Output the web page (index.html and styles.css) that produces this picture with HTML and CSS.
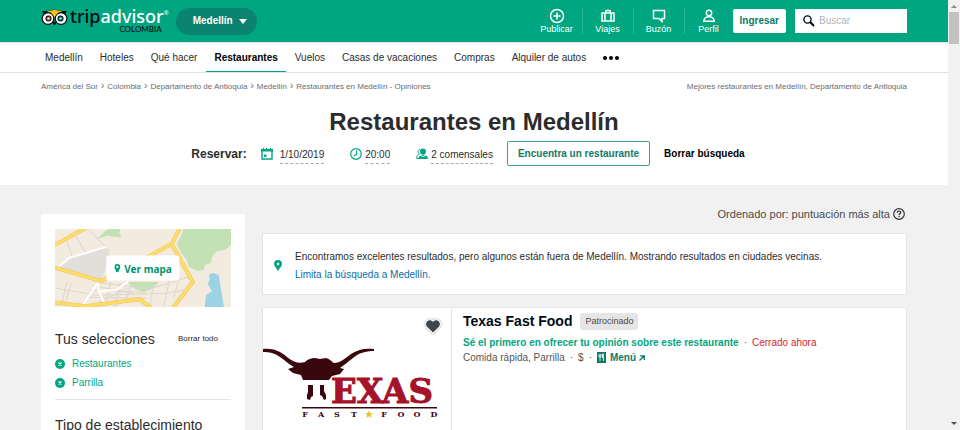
FILE: index.html
```html
<!DOCTYPE html>
<html lang="es">
<head>
<meta charset="utf-8">
<meta name="viewport" content="width=device-width, initial-scale=1">
<title>Restaurantes en Medellín</title>
<link rel="stylesheet" href="styles.css">
</head>
<body>
<div class="page">
  <header class="topbar">
    <div class="wrap topbar-row">
      <a class="logo" href="#">
        <svg class="owl" width="27" height="17" viewBox="0 0 27 17" aria-hidden="true">
          <path d="M1 2H7C11 .3 16 .3 20 2H26L24 5H3Z" fill="#000a12"/>
          <path d="M6 2.500C11 .5 16 .5 21 2.500L13.500 9Z" fill="#fcc40f"/>
          <circle cx="7" cy="9.500" r="6.500" fill="#000a12"/><circle cx="20" cy="9.500" r="6.500" fill="#000a12"/>
          <path d="M10 3.500C12 2.700 15 2.700 17 3.500L13.500 8Z" fill="#fcc40f"/>
          <path d="M11 13h5l-2.500 3.500z" fill="#000a12"/>
          <circle cx="7" cy="9.500" r="5.200" fill="#fff"/><circle cx="20" cy="9.500" r="5.200" fill="#fff"/>
          <circle cx="7.500" cy="9.500" r="3" fill="#000a12"/><circle cx="19.500" cy="9.500" r="3" fill="#000a12"/>
          <circle cx="7.500" cy="9.500" r="2" fill="#ef6945"/><circle cx="19.500" cy="9.500" r="2" fill="#00af87"/>
          <circle cx="7.500" cy="9.500" r=".8" fill="#fff"/><circle cx="19.500" cy="9.500" r=".8" fill="#fff"/>
        </svg>
        <span class="logo-text"><span class="word"><span class="trip">trip</span>advisor<sup>®</sup></span><span class="country">COLOMBIA</span></span>
      </a>
      <button class="place" type="button">Medellín <svg width="8" height="5" viewBox="0 0 8 5" aria-hidden="true"><path d="M0 0h8L4 5z" fill="#fff"/></svg></button>
      <nav class="actions" aria-label="Cuenta">
        <a href="#"><svg width="16" height="16" viewBox="0 0 16 16"><circle cx="8" cy="8" r="6.500"/><path d="M8 4.500v7M4.500 8h7"/></svg>Publicar</a>
        <a href="#"><svg width="16" height="16" viewBox="0 0 16 16"><path d="M2 5h12v8H2zM5 5v8M11 5v8M6 5V2.500h4V5"/></svg>Viajes</a>
        <a href="#"><svg width="16" height="16" viewBox="0 0 16 16"><path d="M2.500 2.500h11v8H11v3L8 10.500H2.500z"/></svg>Buzón</a>
        <a href="#"><svg width="16" height="16" viewBox="0 0 16 16"><circle cx="8" cy="5" r="2.700"/><path d="M2.800 13.300c0-6 10.400-6 10.400 0z"/></svg>Perfil</a>
      </nav>
      <button class="login" type="button">Ingresar</button>
      <label class="search">
        <svg width="12" height="12" viewBox="0 0 12 12" aria-hidden="true"><circle cx="4.500" cy="4.500" r="3.600" fill="none" stroke="#000a12" stroke-width="1.400"/><path d="M7.300 7.300L11 11" stroke="#000a12" stroke-width="2"/></svg>
        <input type="search" placeholder="Buscar" aria-label="Buscar">
      </label>
    </div>
  </header>

  <nav class="tabs" aria-label="Secciones">
    <div class="wrap tabs-row">
      <a href="#">Medellín</a>
      <a href="#">Hoteles</a>
      <a href="#">Qué hacer</a>
      <a href="#" class="current" aria-current="page">Restaurantes</a>
      <a href="#">Vuelos</a>
      <a href="#">Casas de vacaciones</a>
      <a href="#">Compras</a>
      <a href="#">Alquiler de autos</a>
      <button class="more" type="button" aria-label="Más"><svg width="16" height="4" viewBox="0 0 16 4"><circle cx="2" cy="2" r="2"/><circle cx="8" cy="2" r="2"/><circle cx="14" cy="2" r="2"/></svg></button>
    </div>
  </nav>

  <section class="intro">
    <div class="wrap crumbs">
      <ol>
        <li><a href="#">América del Sur</a></li>
        <li><a href="#">Colombia</a></li>
        <li><a href="#">Departamento de Antioquia</a></li>
        <li><a href="#">Medellín</a></li>
        <li>Restaurantes en Medellín - Opiniones</li>
      </ol>
      <span>Mejores restaurantes en Medellín, Departamento de Antioquia</span>
    </div>
    <h1>Restaurantes en Medellín</h1>
    <form class="wrap booking">
      <strong>Reservar:</strong>
      <button class="pick date" type="button"><svg width="12" height="12" viewBox="0 0 12 12" aria-hidden="true"><path d="M1 2v9h10V2" fill="none" stroke="#00a680" stroke-width="1.400"/><path d="M0 1h12v2.500H0zM2 0h1v2H2zM5 0h1v2H5zM9 0h1v2H9z" fill="#00a680"/><path d="M3 6.500h2.500V9H3z" fill="#00a680"/></svg><span>1/10/2019</span></button>
      <button class="pick" type="button"><svg width="12" height="12" viewBox="0 0 12 12" aria-hidden="true"><circle cx="6" cy="6" r="5.300" fill="none" stroke="#00a680" stroke-width="1.200"/><path d="M6.500 2.500v4L4 8" fill="none" stroke="#00a680" stroke-width="1.200"/></svg><span>20:00</span></button>
      <button class="pick" type="button"><svg width="12" height="12" viewBox="0 0 12 12" aria-hidden="true"><circle cx="7" cy="3.500" r="3" fill="#00a680"/><path d="M2.500 11c0-6 9.500-6 9.500 0z" fill="#00a680"/><path d="M4 1.500C1.500 2 1.500 5 3.500 6 1.500 7 .7 8 .7 10.500H3" fill="none" stroke="#00a680"/><path d="M4 7l3 1.500L10 7" fill="none" stroke="#fff"/></svg><span>2 comensales</span></button>
      <button class="find" type="submit">Encuentra un restaurante</button>
      <button class="clear" type="reset">Borrar búsqueda</button>
    </form>
  </section>

  <main class="wrap results">
    <aside class="filters">
      <div class="map">
        <svg viewBox="0 0 175 78" preserveAspectRatio="xMidYMid slice" aria-hidden="true">
          <path d="M0 0h175v78H0z" fill="#f3ebdf"/>
          <g fill="#c3e2b3">
            <path d="M43 9l6-6 5-3h11l-1 4 2 5-7-1-7-1-6 2z"/>
            <path d="M121 15l4-7 3-8h47v16l-6 5-8 1-5 6-1 6-6 2-1 5-6 1-9-4-2-7-5-6z"/>
            <path d="M72 53h31l-5 6-10 4-10-4z"/>
          </g>
          <path d="M2 38l12-9 36-11 5 8-9 26z" fill="#e2dfda"/>
          <path d="M153 46c3-3 7-2 10 1l2 13 3 18h-19l1-12 6-4-4-7 2-5z" fill="#9bd3e4"/>
          <g fill="none" stroke="#ddd6cf">
            <path d="M21 8l9 15M33 0l21 22M12 13l5 14M0 59l42 7 68-2 24-4M40 53l54 7 39-12M12 52l-5 22M16 54l-6 21M55 53l-4 22M65 54l-5 20M75 58l-5 15M98 54l-4 24M114 50l-6 28M124 48l-6 20M42 74l31-15M35 61l55 2M33 68l58 1M38 57l40 7M58 78l15-8"/>
          </g>
          <path d="M0 41l14-12 37-11M43 53L26 78M43 55v7l18-1 12-9M43 61l7 15M94 27l18-9" fill="none" stroke="#fff" stroke-width="2"/>
          <path d="M-2 17L31-1M-2 38l48 14 48-25 22-12 9-17M116 15l21 38-20 26M-2 73l33 4 53-7 12 9" fill="none" stroke="#e8c66a" stroke-width="4"/>
          <path d="M-2 17L31-1M-2 38l48 14 48-25 22-12 9-17M116 15l21 38-20 26M-2 73l33 4 53-7 12 9" fill="none" stroke="#ffdc66" stroke-width="3"/>
        </svg>
        <button class="map-button" type="button"><svg width="6" height="9" viewBox="0 0 8 11" aria-hidden="true"><path d="M4 0a4 4 0 0 1 4 4c0 2-2 4-2.500 7h-3C2 8 0 6 0 4a4 4 0 0 1 4-4zm0 2.500a1.500 1.500 0 1 0 0 3 1.500 1.500 0 0 0 0-3z" fill="#00a680" fill-rule="evenodd"/></svg>Ver mapa</button>
      </div>
      <div class="chosen">
        <h2>Tus selecciones</h2>
        <a href="#" class="reset">Borrar todo</a>
      </div>
      <ul>
        <li><a href="#"><svg width="10" height="10" viewBox="0 0 10 10" aria-hidden="true"><circle cx="5" cy="5" r="5" fill="#00a680"/><path d="M3.500 3.500l3 3M6.500 3.500l-3 3" stroke="#fff" stroke-width="1.200"/></svg>Restaurantes</a></li>
        <li><a href="#"><svg width="10" height="10" viewBox="0 0 10 10" aria-hidden="true"><circle cx="5" cy="5" r="5" fill="#00a680"/><path d="M3.500 3.500l3 3M6.500 3.500l-3 3" stroke="#fff" stroke-width="1.200"/></svg>Parrilla</a></li>
      </ul>
      <h2 class="group">Tipo de establecimiento</h2>
    </aside>

    <div class="list">
      <div class="sort">Ordenado por: puntuación más alta
        <button type="button" aria-label="Ayuda"><svg width="12" height="12" viewBox="0 0 12 12"><circle cx="6" cy="6" r="5.300" fill="none" stroke="#333" stroke-width="1.200"/><path d="M4.300 4.700c0-2.300 3.500-2.200 3.400-.1C7.700 5.700 6 5.700 6 7.200M6 8v1.300" fill="none" stroke="#222" stroke-width="1.200"/></svg></button>
      </div>
      <div class="notice">
        <svg width="8" height="11" viewBox="0 0 8 11" aria-hidden="true"><path d="M4 0a4 4 0 0 1 4 4c0 2.500-2.500 4-4 7C2.500 8 0 6.500 0 4a4 4 0 0 1 4-4zm0 2.700a1.300 1.300 0 1 0 0 2.600 1.300 1.300 0 0 0 0-2.600z" fill="#00a680" fill-rule="evenodd"/></svg>
        <p>Encontramos excelentes resultados, pero algunos están fuera de Medellín. Mostrando resultados en ciudades vecinas.<br><a href="#">Limita la búsqueda a Medellín.</a></p>
      </div>
      <article class="card">
        <div class="photo">
          <svg width="188" height="140" viewBox="0 0 188 140" role="img" aria-label="Texas Fast Food">
            <path d="M0 41C10 40 17 43 24 49C30 54 36 56 42 54C45 51 48 50 52 50L57 51L63 50C67 51 69 54 71 55C77 55 83 50 88 46C95 41 103 40 111 41V43C102 43 96 45 90 50C85 54 81 57 77 60L81 61L77 66L69 68L66 72H40L38 67L30 65L25 61L31 59C25 56 22 52 17 49C12 45 6 44 0 44Z" fill="#39080e"/>
            <path d="M45 77h5v11l-2 1-1 3-3-1v-4l1-3zM57 77h4v6l2 4v4l-2 1-2-4-2-1z" fill="#39080e"/>
            <text class="brand" x="68" y="95">EXAS</text>
            <path d="M39 99h135v1.500H39z" fill="#39080e"/>
            <text class="tagline" x="42 58 74 91 121 138 154 171" y="109">FASTFOOD</text>
            <path d="M106 102.500l1.200 2.500 2.800.2-2.200 1.800.8 2.800-2.600-1.600-2.600 1.600.8-2.800-2.200-1.800 2.800-.2z" fill="#edc32f"/>
          </svg>
          <button class="save" type="button" aria-label="Guardar"><svg width="20" height="18" viewBox="0 0 20 18"><path d="M10 15.500L4.300 10C.5 5.500 6.500.5 10 4.800 13.500.5 19.500 5.500 15.700 10z" fill="#3d464e" stroke="#fff" stroke-width="2" paint-order="stroke"/></svg></button>
        </div>
        <div class="details">
          <div class="name"><h3>Texas Fast Food</h3><span class="tag">Patrocinado</span></div>
          <div class="line"><a href="#" class="review">Sé el primero en ofrecer tu opinión sobre este restaurante</a><i>·</i><span class="closed">Cerrado ahora</span></div>
          <div class="line"><span>Comida rápida, Parrilla</span><i>·</i><span>$</span><i>·</i><a href="#" class="menu"><svg width="9" height="11" viewBox="0 0 9 11" aria-hidden="true"><path d="M0 0h9v11H0z" fill="#0f7a68"/><path d="M3 2v7M2 2v3h2V2M6.500 9V2H5.500v4h1" fill="none" stroke="#fff" stroke-width=".8"/></svg>Menú<svg class="out" width="6" height="6" viewBox="0 0 6 6" aria-hidden="true"><path d="M.5 5.500L5 1M1 .8h4.300v4.200" fill="none" stroke="#0f7a68" stroke-width="1.300"/></svg></a></div>
        </div>
      </article>
    </div>
  </main>
</div>
<div class="scrollbar" aria-hidden="true">
  <svg width="6" height="3" viewBox="0 0 6 3"><path d="M0 3l3-3 3 3z" fill="#8a8a8a"/></svg>
  <div class="thumb"></div>
  <svg width="6" height="3" viewBox="0 0 6 3"><path d="M0 0h6L3 3z" fill="#505050"/></svg>
</div>
</body>
</html>
```

FILE: styles.css
```css
* { box-sizing: border-box; }

body {
  margin: 0;
  display: flex;
  height: 100vh;
  overflow: hidden;
  background: #f1f1f1;
  color: #2c2c2c;
  font: 10px/14px "Liberation Sans", Arial, sans-serif;
}

a { color: inherit; text-decoration: none; }
h1, h2, h3, p, ul, ol { margin: 0; padding: 0; }
ul, ol { list-style: none; }
svg { display: block; flex: none; }
button { margin: 0; padding: 0; border: 0; background: none; color: inherit; font: inherit; white-space: nowrap; cursor: pointer; }

.page { flex: 1; min-width: 0; overflow: hidden; }
.wrap { padding-left: 41px; padding-right: 41px; }

/* Top bar */
.topbar { background: #00a680; }
.topbar-row { display: flex; align-items: center; height: 42px; }
.logo { display: flex; align-items: flex-start; gap: 2px; margin-right: 7px; }
.owl { margin-top: 1px; }
.logo-text { display: flex; flex-direction: column; color: #fff; font-family: "Noto Sans", sans-serif; }
.word { font-size: 18px; font-weight: 500; line-height: 16px; }
.word sup { font-size: 6px; font-weight: 400; line-height: 0; vertical-align: 8px; }
.trip { color: #000a12; }
.country { align-self: flex-end; margin-right: 7px; color: #000a12; font: 500 8px/10px Lato, sans-serif; }
.place {
  display: flex; align-items: center; gap: 6px;
  height: 27px; padding: 0 10px 0 17px;
  border-radius: 14px; background: #0a8370; color: #fff; font-weight: 700;
}
.actions { display: flex; margin-left: auto; }
.actions a {
  display: flex; flex-direction: column; align-items: center;
  width: 51px; height: 26px;
  border-right: 1px solid #2cb597;
  color: #fff; font-size: 9px; line-height: 11px;
}
.actions a:last-child { width: 48px; border: 0; }
.actions svg { fill: none; stroke: #fff; stroke-width: 1.5; }
.login {
  height: 24px; padding: 0 7px;
  border-radius: 2px; background: #fff; color: #0f7a68; font-weight: 700;
}
.search {
  display: flex; align-items: center; gap: 4px;
  width: 112px; height: 24px; margin-left: 9px; padding: 0 8px;
  background: #fff;
}
.search input { flex: 1; min-width: 0; padding: 0; border: 0; outline: 0; background: none; font: inherit; }
.search input::placeholder { color: #b5b5b5; }

/* Section tabs */
.tabs { background: #fff; border-top: 1px solid #e0e0e0; border-bottom: 1px solid #e0e0e0; }
.tabs-row { display: flex; gap: 1px; height: 29px; padding-left: 37px; }
.tabs a { padding: 0 8px; line-height: 29px; white-space: nowrap; }
.tabs .current { border-bottom: 1px solid #00a680; color: #000; font-weight: 700; }
.more { display: flex; align-items: center; padding: 0 8px; }
.more svg { fill: #000; }

/* Heading and booking row */
.intro { height: 112px; background: #fff; }
.crumbs { display: flex; justify-content: space-between; padding-top: 7px; color: #6b6b6b; font-size: 8px; white-space: nowrap; }
.crumbs ol { display: flex; }
.crumbs li + li::before { content: "›"; margin: 0 3px; font-size: 10px; line-height: 8px; }
h1 { margin-top: 13px; font-size: 24px; line-height: 30px; text-align: center; }
.booking { display: flex; align-items: center; justify-content: center; height: 25px; margin-top: 4px; padding-right: 53px; }
.booking strong { margin-right: 14px; font-size: 12px; }
.pick { display: flex; align-items: center; gap: 3px; margin-right: 26px; }
.pick span { padding-top: 3px; border-bottom: 1px dashed #aaa; line-height: 17px; }
.date { gap: 7px; }
.find {
  height: 25px; margin: 0 14px 0 -12px; padding: 0 10px;
  border: 1px solid #3d9f8b; border-radius: 2px; color: #0f7a68; font-weight: 700;
}
.clear { color: #000; font-weight: 700; }

/* Results */
.results { display: flex; align-items: flex-start; gap: 17px; }
.filters { flex: none; width: 204px; height: 400px; margin-top: 29px; padding: 15px 14px; background: #fff; }
.map { position: relative; height: 78px; }
.map > svg { width: 100%; height: 100%; }
.map-button {
  position: absolute; top: 50%; left: 50%; transform: translate(-50%, -50%);
  display: flex; align-items: center; gap: 4px;
  height: 25px; padding: 0 8px;
  border-radius: 2px; background: #fff; color: #00926f;
  font-family: "Noto Sans", sans-serif; font-weight: 700;
}
.chosen { display: flex; align-items: center; justify-content: space-between; margin-top: 22px; padding-right: 13px; }
h2 { font-size: 14px; font-weight: 400; line-height: 20px; }
.reset { font-size: 8px; }
.filters ul { padding: 5px 0 7px; border-bottom: 1px solid #e5e5e5; }
.filters li a { display: flex; align-items: center; gap: 7px; color: #00a680; line-height: 19px; }
.group { margin-top: 15px; white-space: nowrap; }

.list { flex: 1; min-width: 0; }
.sort { display: flex; align-items: center; justify-content: flex-end; gap: 3px; margin-top: 20px; padding-right: 2px; color: #4a4a4a; font-size: 11px; line-height: 18px; }
.notice, .card { border: 1px solid #e5e5e5; border-radius: 2px; background: #fff; }
.notice { display: flex; align-items: center; gap: 13px; height: 62px; margin-top: 10px; padding: 3px 11px 0; line-height: 18px; }
.notice a { color: #0a6ea8; }
.card { display: flex; height: 140px; margin-top: 12px; }
.photo { position: relative; flex: none; width: 189px; border-right: 1px solid #e5e5e5; overflow: hidden; }
.brand { font: 700 34px "DejaVu Serif", serif; fill: #a51229; stroke: #a51229; stroke-width: 1px; }
.tagline { font: 700 8px "DejaVu Serif", serif; fill: #39080e; text-anchor: middle; }
.save { position: absolute; top: 9px; right: 8px; filter: drop-shadow(0 0 1px #999); }
.details { padding: 5px 11px; color: #555; }
.name { display: flex; align-items: center; gap: 8px; margin-bottom: 5px; }
h3 { color: #000a12; font-size: 14px; line-height: 17px; }
.tag { padding: 0 5px; border-radius: 3px; background: #e5e5e5; color: #4a4a4a; font-size: 9px; line-height: 17px; }
.line { display: flex; align-items: center; line-height: 15px; white-space: nowrap; }
.line i { margin: 0 5px; font-style: normal; }
.review { color: #00a680; font-weight: 700; }
.closed { color: #e0202b; }
.menu { display: flex; align-items: center; gap: 4px; color: #0f7a68; font-weight: 700; }
.out { margin-left: -1px; }

/* Scroll track drawn beside the page */
.scrollbar { display: flex; flex-direction: column; align-items: center; width: 12px; padding: 5px 0; background: #f1f1f1; }
.thumb { width: 10px; height: 32px; margin: 4px 0 auto; background: #c1c1c1; }
```
